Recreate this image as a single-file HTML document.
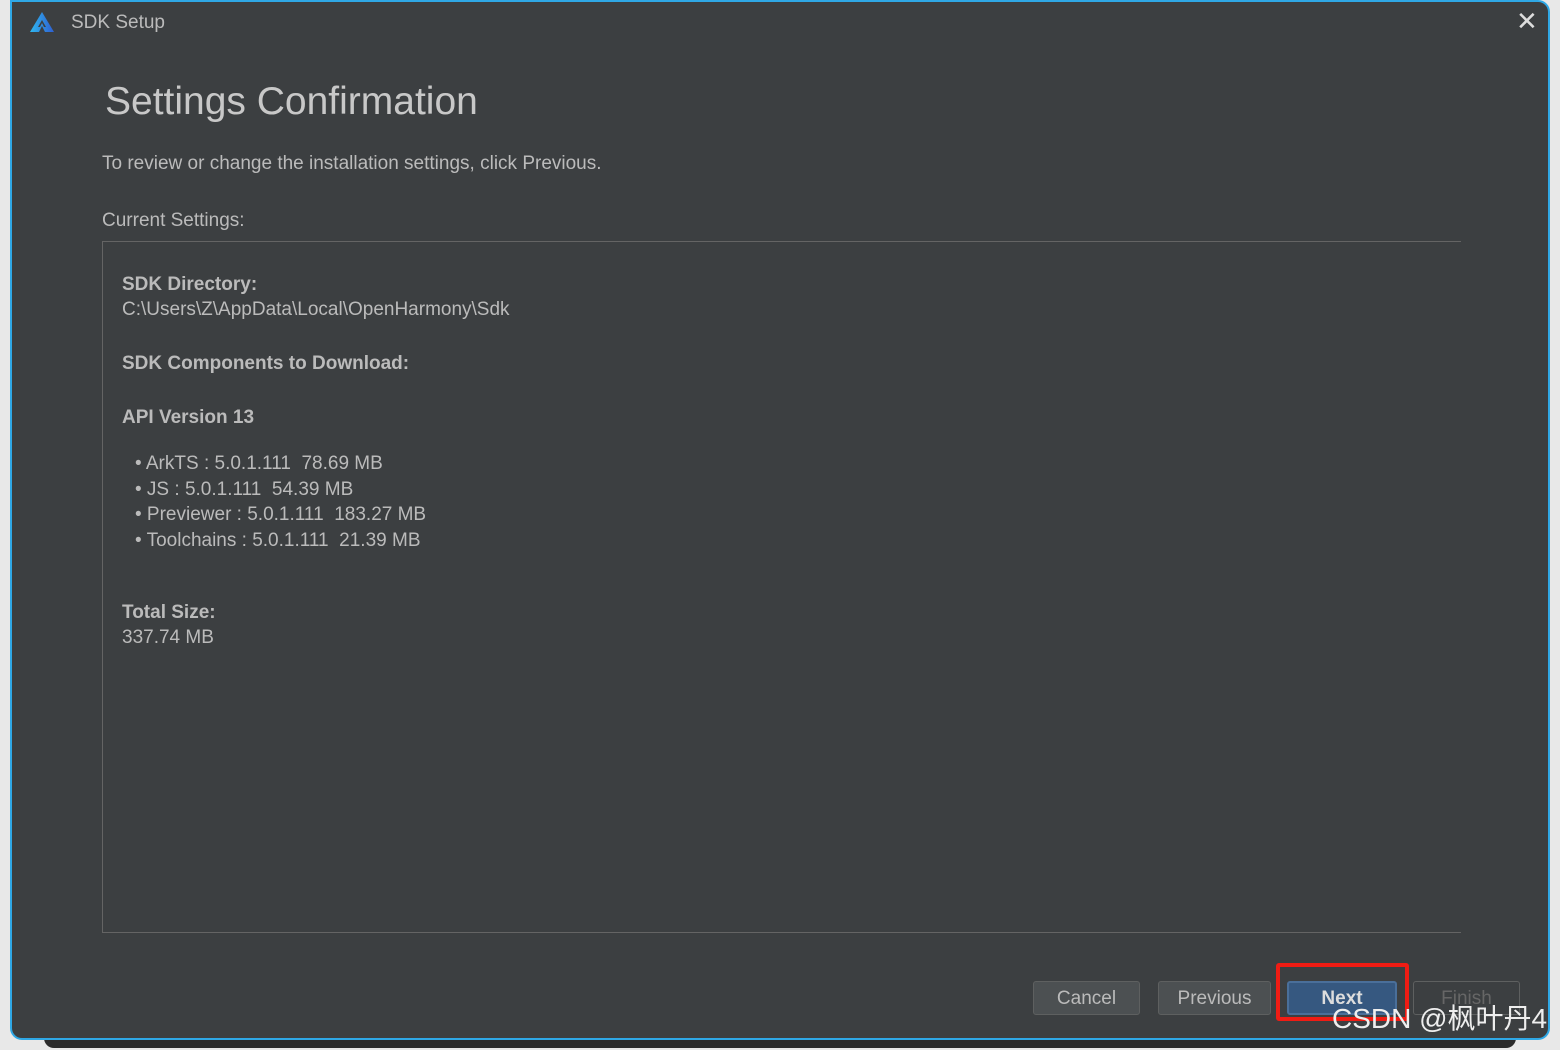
<!DOCTYPE html>
<html><head><meta charset="utf-8"><style>
body{margin:0;width:1560px;height:1050px;background:#e8e8e8;position:relative;overflow:hidden;font-family:"Liberation Sans","Noto Sans CJK SC",sans-serif;}
.shadow{position:absolute;left:44px;top:1000px;width:1472px;height:48px;background:#2b2b2b;border-radius:0 0 10px 10px;}
.win{position:absolute;left:10px;top:0;width:1536px;height:1036px;background:#3c3f41;border:2px solid #2fa8e6;border-radius:0 12px 12px 12px;color:#bbbbbb;}
.t{position:absolute;white-space:nowrap;}
.panel{position:absolute;left:90px;top:239px;width:1358px;height:690px;border:1px solid #646464;border-right:none;}
.btn{position:absolute;top:979px;height:34px;border:1px solid #5e6060;border-radius:3px;background:#4c5052;color:#bbb;font-size:19px;text-align:center;line-height:34px;box-sizing:border-box;}
</style></head><body>
<div class="shadow"></div>
<div class="win">
<svg style="position:absolute;left:17px;top:9px" width="26" height="22" viewBox="0 0 26 22"><defs><linearGradient id="g" x1="0" x2="1"><stop offset="0" stop-color="#2fb8f0"/><stop offset="1" stop-color="#2f5fd0"/></linearGradient></defs><path d="M13 1 L25 21 L16 21 L13 15 L10 21 L1 21 Z M13 9 L9 16 L11 16 L13 12 L15 16 L17 16 Z" fill="url(#g)" fill-rule="evenodd"/></svg>
<div class="t" style="left:59px;top:10px;font-size:19px;color:#bbb">SDK Setup</div>
<div class="t" style="left:1504px;top:4px;font-size:26px;color:#ddd">✕</div>
<div class="t" style="left:93px;top:78px;font-size:39px;color:#c8c8c8">Settings Confirmation</div>
<div class="t" style="left:90px;top:151px;font-size:19px">To review or change the installation settings, click Previous.</div>
<div class="t" style="left:90px;top:208px;font-size:19px">Current Settings:</div>
<div class="panel">
<div class="t" style="left:19px;top:32px;font-size:19px;font-weight:bold">SDK Directory:</div>
<div class="t" style="left:19px;top:57px;font-size:19px">C:\Users\Z\AppData\Local\OpenHarmony\Sdk</div>
<div class="t" style="left:19px;top:111px;font-size:19px;font-weight:bold">SDK Components to Download:</div>
<div class="t" style="left:19px;top:165px;font-size:19px;font-weight:bold">API Version 13</div>
<div class="t" style="left:32px;top:209px;font-size:19px;line-height:25.7px">• ArkTS : 5.0.1.111&nbsp; 78.69 MB<br>• JS : 5.0.1.111&nbsp; 54.39 MB<br>• Previewer : 5.0.1.111&nbsp; 183.27 MB<br>• Toolchains : 5.0.1.111&nbsp; 21.39 MB</div>
<div class="t" style="left:19px;top:360px;font-size:19px;font-weight:bold">Total Size:</div>
<div class="t" style="left:19px;top:385px;font-size:19px">337.74 MB</div>
</div>
<div class="btn" style="left:1021px;width:107px">Cancel</div>
<div class="btn" style="left:1146px;width:113px">Previous</div>
<div class="btn" style="left:1275px;width:110px;background:#365880;border:2px solid #4a6f9a;font-weight:bold;color:#ddd;line-height:32px">Next</div>
<div class="btn" style="left:1401px;width:107px;background:#3c3f41;color:#666">Finish</div>
</div>
<div style="position:absolute;left:1276px;top:963px;width:133px;height:58px;border:4px solid #f01c14;border-radius:3px;box-sizing:border-box"></div>
<div class="t" style="left:1332px;top:1002px;font-size:28px;line-height:34px;color:#eee;font-family:'Liberation Sans','Noto Sans CJK SC',sans-serif">CSDN @枫叶丹4</div>
</body></html>
